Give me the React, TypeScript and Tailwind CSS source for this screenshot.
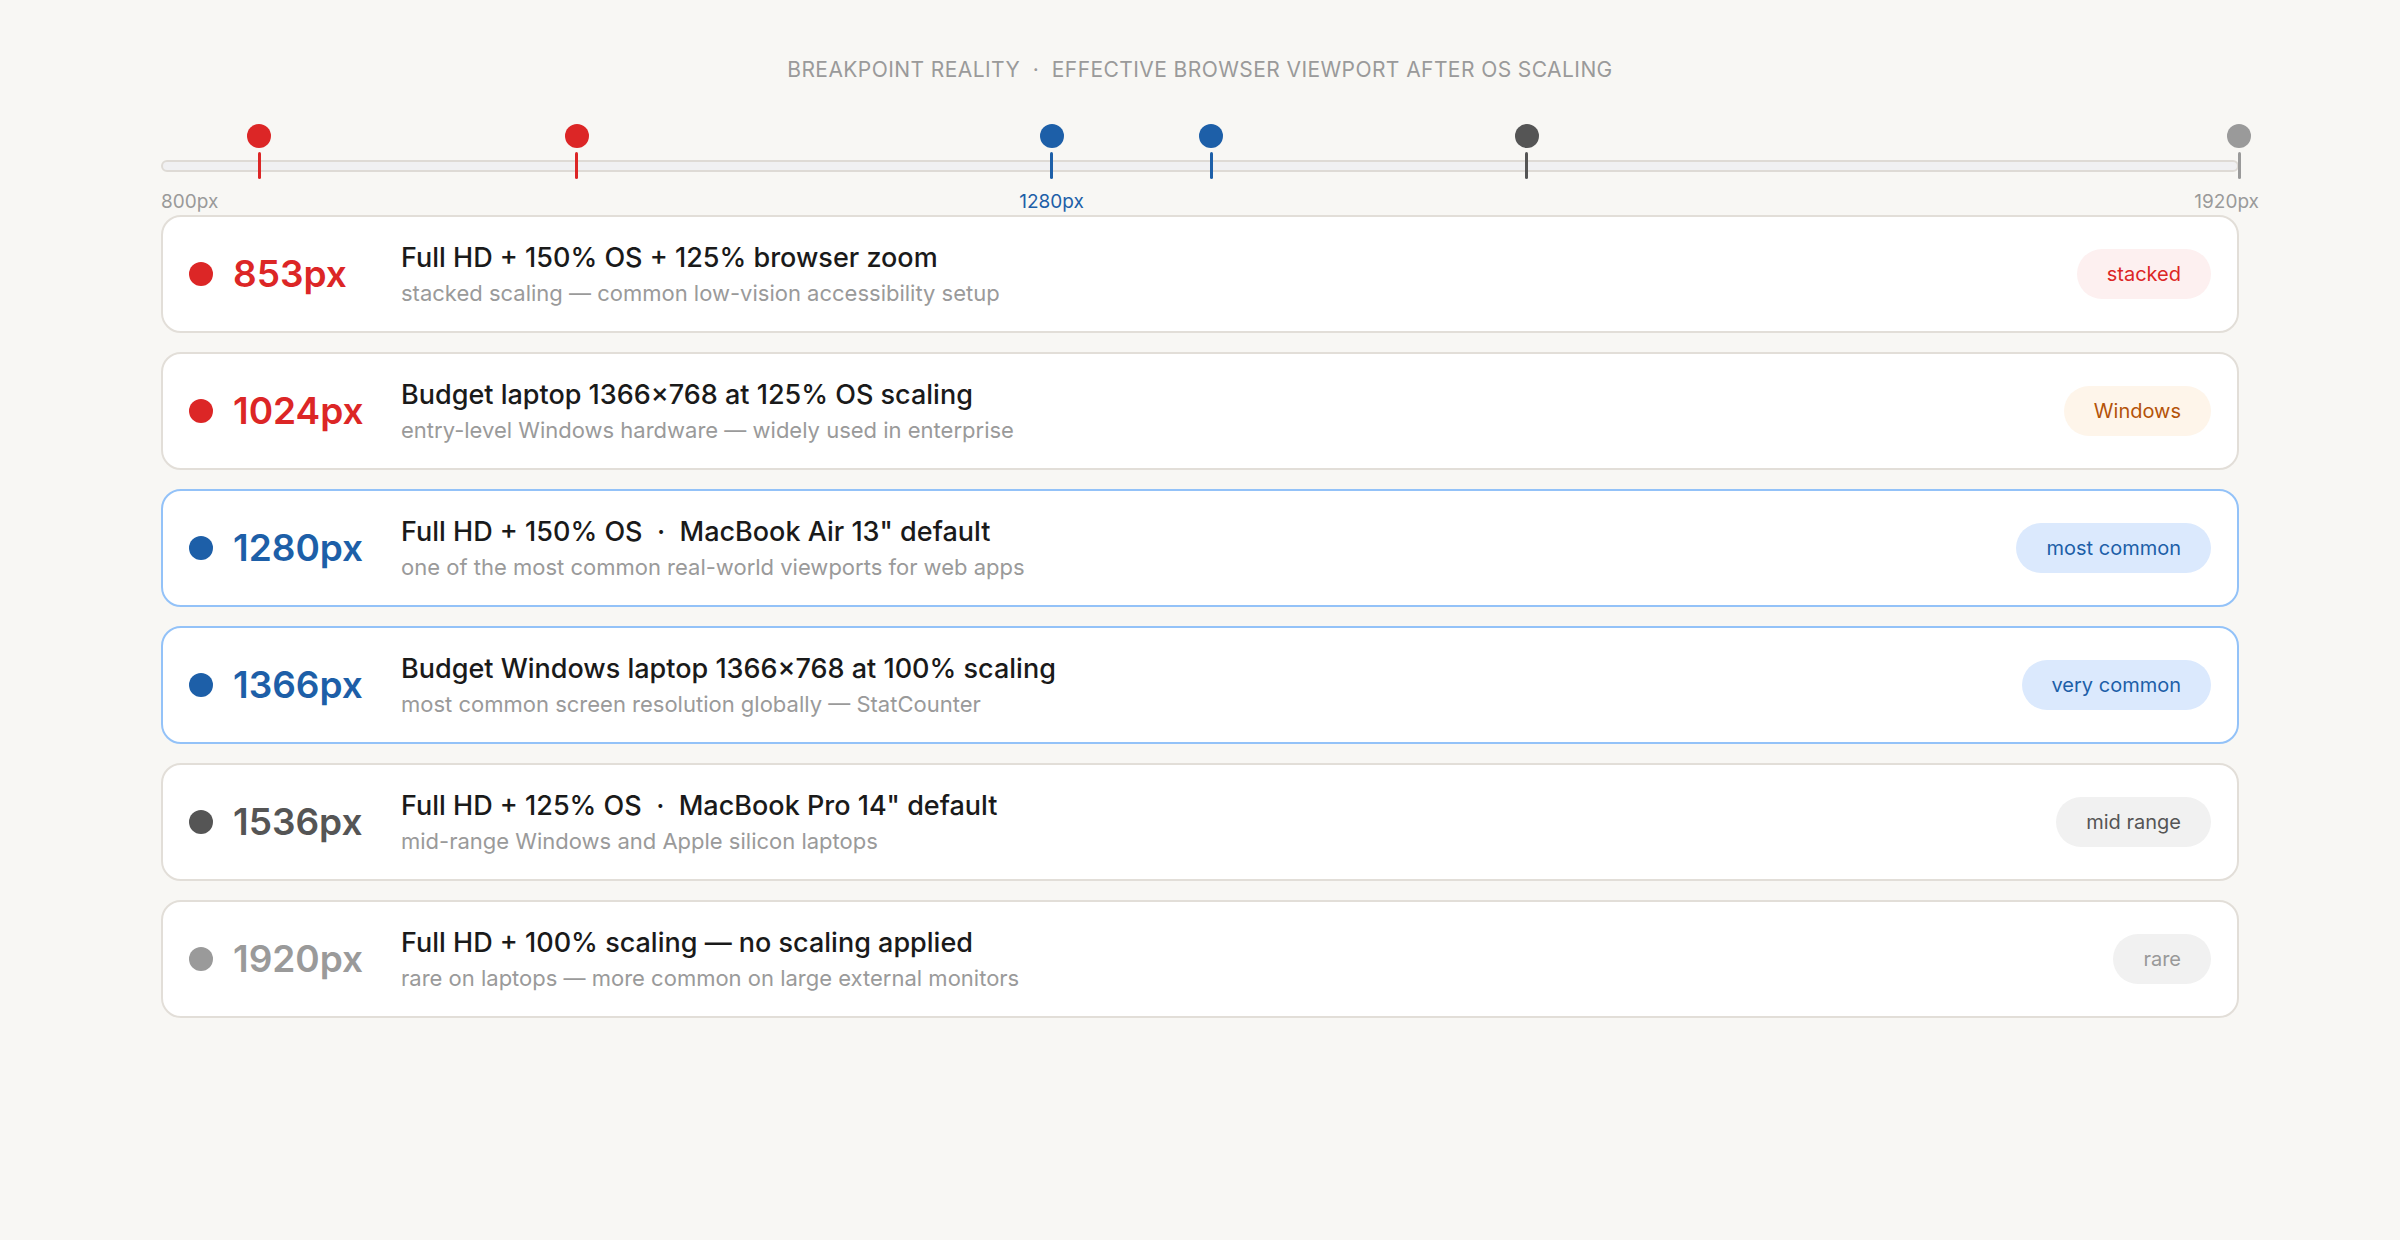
import React from "react";

const markers = [
  { v: 853, c: "#dc2626" },
  { v: 1024, c: "#dc2626" },
  { v: 1280, c: "#1d5fa8" },
  { v: 1366, c: "#1d5fa8" },
  { v: 1536, c: "#555555" },
  { v: 1920, c: "#9a9a9a" },
];
const pct = (v: number) => ((v - 800) / 1120) * 100;

const rows = [
  { n: "853px", c: "#dc2626", t: "Full HD + 150% OS + 125% browser zoom", s: "stacked scaling — common low-vision accessibility setup", b: "stacked", bb: "bg-[#fdf0f0] text-[#dc2626]", border: "border-[#e2ded8]" },
  { n: "1024px", c: "#dc2626", t: "Budget laptop 1366×768 at 125% OS scaling", s: "entry-level Windows hardware — widely used in enterprise", b: "Windows", bb: "bg-[#fef5ea] text-[#b45309]", border: "border-[#e2ded8]" },
  { n: "1280px", c: "#1d5fa8", t: "Full HD + 150% OS  ·  MacBook Air 13\" default", s: "one of the most common real-world viewports for web apps", b: "most common", bb: "bg-[#dbe9fd] text-[#1d5fa8]", border: "border-[#93c2f8]" },
  { n: "1366px", c: "#1d5fa8", t: "Budget Windows laptop 1366×768 at 100% scaling", s: "most common screen resolution globally — StatCounter", b: "very common", bb: "bg-[#dbe9fd] text-[#1d5fa8]", border: "border-[#93c2f8]" },
  { n: "1536px", c: "#555555", t: "Full HD + 125% OS  ·  MacBook Pro 14\" default", s: "mid-range Windows and Apple silicon laptops", b: "mid range", bb: "bg-[#f1f1f1] text-[#555555]", border: "border-[#e2ded8]" },
  { n: "1920px", c: "#9a9a9a", t: "Full HD + 100% scaling — no scaling applied", s: "rare on laptops — more common on large external monitors", b: "rare", bb: "bg-[#f1f1f1] text-[#999999]", border: "border-[#e2ded8]" },
];

export default function App() {
  return (
    <div className="min-h-[1240px] w-full bg-[#f8f7f4] font-[Inter,sans-serif] pt-[56px]">
      <div className="mx-auto w-[2078px]">
        <div className="text-center text-[21px] tracking-[0.02em] text-[#9a9a9a] leading-[28px]">
          BREAKPOINT REALITY&nbsp; · &nbsp;EFFECTIVE BROWSER VIEWPORT AFTER OS SCALING
        </div>
        <div className="relative mt-[40px] h-[90px]">
          <div className="absolute left-0 right-0 top-[36px] h-[12px] rounded-full border-2 border-[#deDad5] bg-[#f0f0f2]" />
          {markers.map((m) => (
            <div key={m.v} className="absolute top-0 flex w-[24px] -translate-x-1/2 flex-col items-center" style={{ left: `${pct(m.v)}%` }}>
              <div className="h-[24px] w-[24px] rounded-full" style={{ background: m.c }} />
              <div className="mt-[4px] h-[27px] w-[3px] rounded-full" style={{ background: m.c }} />
            </div>
          ))}
          <div className="absolute left-0 top-[64px] text-[19px] text-[#9a9a9a]">800px</div>
          <div className="absolute top-[64px] -translate-x-1/2 text-[19px] text-[#1d5fa8]" style={{ left: `${pct(1280)}%` }}>1280px</div>
          <div className="absolute right-[-20px] top-[64px] text-[19px] text-[#9a9a9a]">1920px</div>
        </div>
        <div className="mt-[1px] flex flex-col gap-[19px]">
          {rows.map((r) => (
            <div key={r.n} className={`flex h-[118px] items-center rounded-[20px] border-2 bg-white pl-[26px] pr-[26px] ${r.border}`}>
              <div className="h-[24px] w-[24px] shrink-0 rounded-full" style={{ background: r.c }} />
              <div className="ml-[20px] w-[168px] shrink-0 text-[37px] font-semibold" style={{ color: r.c }}>{r.n}</div>
              <div className="flex-1">
                <div className="whitespace-pre text-[27px] leading-[36px] text-[#1a1a1a] font-medium">{r.t}</div>
                <div className="mt-[2px] text-[22px] leading-[30px] text-[#9a9a9a]">{r.s}</div>
              </div>
              <div className={`flex h-[50px] items-center rounded-full px-[30px] text-[20px] ${r.bb}`}>{r.b}</div>
            </div>
          ))}
        </div>
      </div>
    </div>
  );
}
